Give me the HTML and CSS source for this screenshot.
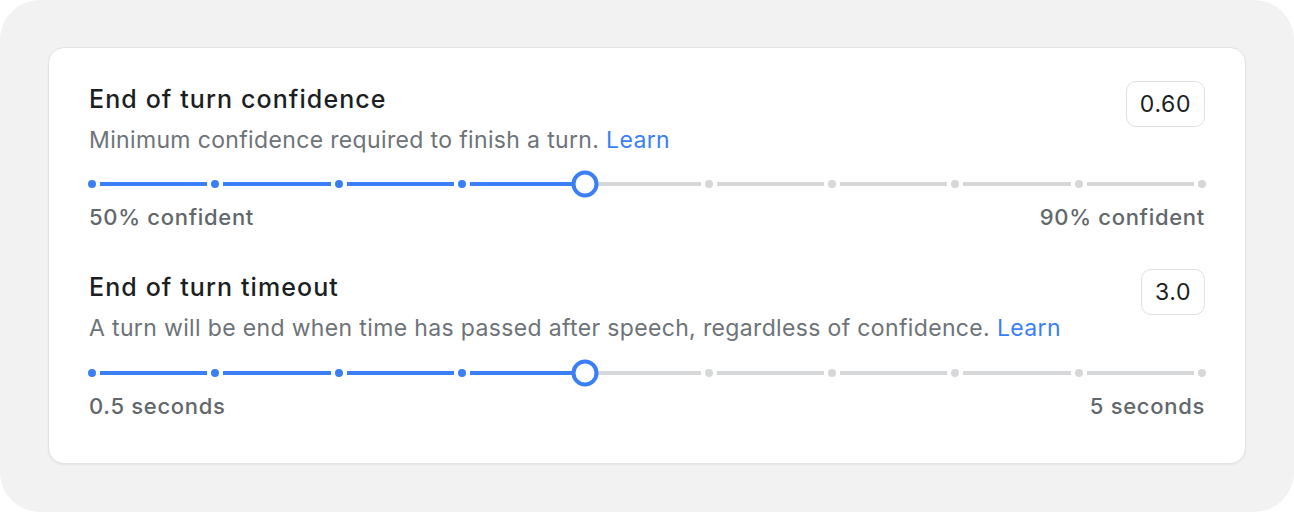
FILE: index.html
```html
<!DOCTYPE html>
<html lang="en">
<head>
<meta charset="utf-8">
<title>Turn settings</title>
<link rel="stylesheet" href="styles.css">
</head>
<body>
<div class="frame">
  <div class="card">
    <section class="setting">
      <h2 class="title">End of turn confidence</h2>
      <div class="value">0.60</div>
      <p class="desc">Minimum confidence required to finish a turn. <a class="learn" href="#">Learn</a></p>
      <div class="slider">
        <span class="dot on"></span><span class="seg on"></span>
        <span class="dot on"></span><span class="seg on"></span>
        <span class="dot on"></span><span class="seg on"></span>
        <span class="dot on"></span><span class="seg on"></span>
        <span class="dot on has-knob"><span class="knob"></span></span><span class="seg"></span>
        <span class="dot"></span><span class="seg"></span>
        <span class="dot"></span><span class="seg"></span>
        <span class="dot"></span><span class="seg"></span>
        <span class="dot"></span><span class="seg"></span>
        <span class="dot"></span>
      </div>
      <div class="labels"><span>50% confident</span><span>90% confident</span></div>
    </section>
    <section class="setting second">
      <h2 class="title">End of turn timeout</h2>
      <div class="value">3.0</div>
      <p class="desc">A turn will be end when time has passed after speech, regardless of confidence. <a class="learn" href="#">Learn</a></p>
      <div class="slider">
        <span class="dot on"></span><span class="seg on"></span>
        <span class="dot on"></span><span class="seg on"></span>
        <span class="dot on"></span><span class="seg on"></span>
        <span class="dot on"></span><span class="seg on"></span>
        <span class="dot on has-knob"><span class="knob"></span></span><span class="seg"></span>
        <span class="dot"></span><span class="seg"></span>
        <span class="dot"></span><span class="seg"></span>
        <span class="dot"></span><span class="seg"></span>
        <span class="dot"></span><span class="seg"></span>
        <span class="dot"></span>
      </div>
      <div class="labels"><span>0.5 seconds</span><span>5 seconds</span></div>
    </section>
  </div>
</div>
</body>
</html>
```

FILE: styles.css
```css
html, body {
  margin: 0;
  padding: 0;
  background: #ffffff;
}
body {
  font-family: Inter, "Noto Sans", sans-serif;
}
.frame {
  width: 1294px;
  height: 512px;
  box-sizing: border-box;
  background: #f1f2f1;
  border-radius: 40px;
  padding: 47px 48px 48px 48px;
}
.card {
  background: #ffffff;
  border: 1px solid #e2e4e4;
  border-radius: 16px;
  box-shadow: 0 1px 2px rgba(0, 0, 0, 0.06);
  padding: 35px 40px 44px 40px;
  height: 100%;
  box-sizing: border-box;
}
.setting {
  display: grid;
  grid-template-columns: 1fr auto;
}
.setting + .setting {
  margin-top: 41px;
}
.title {
  grid-column: 1;
  grid-row: 1;
  margin: 0;
  font-size: 25px;
  line-height: 32px;
  font-weight: 500;
  letter-spacing: 1.1px;
  color: #1b1e22;
}
.value {
  grid-column: 2;
  grid-row: 1 / 3;
  align-self: start;
  margin-top: -2px;
  height: 46px;
  box-sizing: border-box;
  padding: 0 13px;
  border: 1px solid #dfe1e2;
  border-radius: 10px;
  display: flex;
  align-items: center;
  justify-content: center;
  font-size: 23px;
  letter-spacing: 0.6px;
  color: #1b1e22;
}
.desc {
  grid-column: 1;
  grid-row: 2;
  margin: 10px 0 0 0;
  font-size: 23px;
  line-height: 30px;
  letter-spacing: 0.35px;
  color: #6d7378;
}
.learn {
  color: #3b7ff6;
  text-decoration: none;
}
.slider {
  grid-column: 1 / 3;
  display: flex;
  align-items: center;
  gap: 4px;
  height: 28px;
  margin: 15px -1px 0 -1px;
}
.second .slider {
  margin-top: 16px;
}
.dot {
  width: 8px;
  height: 8px;
  border-radius: 50%;
  background: #d5d7d8;
  flex: none;
}
.dot.on {
  background: #3b7ff6;
}
.seg {
  flex: 1;
  height: 4px;
  background: #d5d7d8;
}
.seg.on {
  background: #3b7ff6;
}
.has-knob {
  position: relative;
}
.knob {
  position: absolute;
  left: 50%;
  top: 50%;
  width: 27px;
  height: 27px;
  box-sizing: border-box;
  border: 4px solid #3b7ff6;
  background: #ffffff;
  border-radius: 50%;
  transform: translate(-50%, -50%);
}
.labels {
  grid-column: 1 / 3;
  display: flex;
  justify-content: space-between;
  margin-top: 6px;
  font-size: 22px;
  line-height: 26px;
  font-weight: 500;
  letter-spacing: 0.7px;
  color: #62676c;
}
```
